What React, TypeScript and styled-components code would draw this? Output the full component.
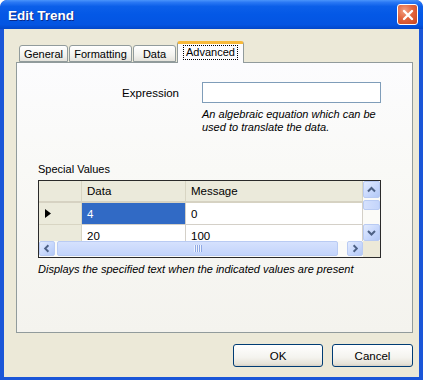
import React from "react";
import styled, { createGlobalStyle } from "styled-components";

const GlobalStyle = createGlobalStyle`
	html, body {
		margin: 0;
		padding: 0;
		background: #ffffff;
	}
	body {
		font-family: "Liberation Sans", Arial, sans-serif;
		font-size: 11px;
		color: #000;
	}
`;

type TabInfo = { label: string; width: number; active?: boolean };

const TABS: Array<TabInfo> = [
	{ label: "General", width: 49 },
	{ label: "Formatting", width: 63 },
	{ label: "Data", width: 43 },
	{ label: "Advanced", width: 67, active: true },
];

const ROWS = [
	{ data: "4", message: "0", current: true },
	{ data: "20", message: "100", current: false },
];

const Chevron: React.FC<{ dir: "up" | "down" | "left" | "right" }> = ({ dir }) => {
	const d = {
		up: "M4 9.5 L7.5 6 L11 9.5",
		down: "M4 6 L7.5 9.5 L11 6",
		left: "M9 4 L5.5 7.5 L9 11",
		right: "M6 4 L9.5 7.5 L6 11",
	}[dir];
	return (
		<svg width="15" height="15" viewBox="0 0 15 15">
			<path d={d} fill="none" stroke="#4d6185" strokeWidth="2" />
		</svg>
	);
};

const App: React.FC = () => {
	return (
		<>
			<GlobalStyle />
			<Window>
				{/* title bar */}
				<TitleBar>
					<Title>Edit Trend</Title>
					<CloseButton>
						<svg width="12" height="12" viewBox="0 0 12 12">
							<path d="M2 2 L10 10 M10 2 L2 10" stroke="#fff" strokeWidth="2.4" strokeLinecap="round" />
						</svg>
					</CloseButton>
				</TitleBar>

				<Body>
					{/* tabs */}
					<TabStrip>
						{TABS.map((tab) => (
							<Tab key={tab.label} $width={tab.width} $active={!!tab.active}>
								{tab.active ? <FocusLabel>{tab.label}</FocusLabel> : tab.label}
							</Tab>
						))}
					</TabStrip>

					<TabPanel>
						{/* expression */}
						<ExprGrid>
							<FieldLabel>Expression</FieldLabel>
							<TextBox />
							<HelpText>
								An algebraic equation which can be
								<br />
								used to translate the data.
							</HelpText>
						</ExprGrid>

						{/* special values */}
						<SectionLabel>Special Values</SectionLabel>
						<GridFrame>
							<GridTable>
								<HeaderCorner />
								<HeaderCell>Data</HeaderCell>
								<HeaderCell>Message</HeaderCell>
								{ROWS.map((row) => (
									<React.Fragment key={row.data}>
										<RowHeader>
											{row.current && (
												<svg width="6" height="9" viewBox="0 0 6 9">
													<path d="M0 0 L6 4.5 L0 9 Z" fill="#000" />
												</svg>
											)}
										</RowHeader>
										<Cell $selected={row.current}>{row.data}</Cell>
										<Cell>{row.message}</Cell>
									</React.Fragment>
								))}
							</GridTable>
							<VScroll>
								<ScrollArrow $h={17}>
									<Chevron dir="up" />
								</ScrollArrow>
								<VThumb />
								<Spacer />
								<ScrollArrow $h={17}>
									<Chevron dir="down" />
								</ScrollArrow>
							</VScroll>
							<HScroll>
								<ScrollArrow $w={16}>
									<Chevron dir="left" />
								</ScrollArrow>
								<HThumb>
									<Grip />
								</HThumb>
								<ScrollArrow $w={16}>
									<Chevron dir="right" />
								</ScrollArrow>
							</HScroll>
							<Corner />
						</GridFrame>
						<HelpText>Displays the specified text when the indicated values are present</HelpText>
					</TabPanel>

					{/* dialog buttons */}
					<ButtonRow>
						<DialogButton $width={90}>OK</DialogButton>
						<DialogButton $width={81}>Cancel</DialogButton>
					</ButtonRow>
				</Body>
			</Window>
		</>
	);
};

const Window = styled.div`
	width: 423px;
	height: 380px;
	box-sizing: border-box;
	display: flex;
	flex-direction: column;
	background: #1a56d8;
	border-radius: 7px 7px 0 0;
	padding: 0 4px 3px 4px;
	overflow: hidden;
`;

const TitleBar = styled.div`
	height: 30px;
	margin: 0 -4px;
	padding: 0 5px 0 8px;
	display: flex;
	align-items: center;
	justify-content: space-between;
	border-radius: 7px 7px 0 0;
	background: linear-gradient(
		180deg,
		#4a95fb 0%,
		#2a78f4 8%,
		#0b5fe9 22%,
		#0458e6 50%,
		#0455e2 85%,
		#0347c9 100%
	);
`;

const Title = styled.div`
	font-family: "Liberation Sans", Arial, sans-serif;
	font-weight: bold;
	font-size: 13.5px;
	color: #fff;
	text-shadow: 1px 1px 0 #0a2a8a;
	padding-top: 1px;
`;

const CloseButton = styled.div`
	width: 21px;
	height: 21px;
	box-sizing: border-box;
	border: 1px solid #fff;
	border-radius: 3px;
	display: flex;
	align-items: center;
	justify-content: center;
	background: radial-gradient(circle at 35% 30%, #f2a184 0%, #e2653e 45%, #c8441e 100%);
`;

const Body = styled.div`
	flex: 1;
	background: #ece9d8;
	display: flex;
	flex-direction: column;
	padding: 12px 6px 10px 12px;
`;

const TabStrip = styled.div`
	height: 21px;
	display: flex;
	align-items: flex-end;
	gap: 1px;
	padding-left: 3px;
	position: relative;
	z-index: 1;
`;

const Tab = styled.div<{ $width: number; $active: boolean }>`
	width: ${(p) => p.$width}px;
	box-sizing: border-box;
	height: ${(p) => (p.$active ? 22 : 17)}px;
	margin-bottom: ${(p) => (p.$active ? -1 : 0)}px;
	border: 1px solid #919b9c;
	border-bottom: ${(p) => (p.$active ? "none" : "1px solid #919b9c")};
	border-top: ${(p) => (p.$active ? "3px solid #f7b93a" : "1px solid #919b9c")};
	border-radius: 3px 3px 0 0;
	background: ${(p) => (p.$active ? "#fcfcfe" : "linear-gradient(180deg, #ffffff 0%, #f3f3ef 60%, #e4e3dc 100%)")};
	display: flex;
	align-items: ${(p) => (p.$active ? "flex-start" : "center")};
	justify-content: center;
	font-size: 11px;
	padding-top: ${(p) => (p.$active ? 1 : 0)}px;
`;

const FocusLabel = styled.span`
	border: 1px dotted #000;
	padding: 0 2px;
	line-height: 13px;
`;

const TabPanel = styled.div`
	height: 271px;
	box-sizing: border-box;
	border: 1px solid #919b9c;
	background: linear-gradient(180deg, #fcfcfe 0%, #f9f9f6 40%, #f4f3ee 100%);
	display: flex;
	flex-direction: column;
	padding: 19px 31px 0 21px;
`;

const ExprGrid = styled.div`
	display: grid;
	grid-template-columns: 1fr 179px;
	column-gap: 23px;
	row-gap: 5px;
`;

const FieldLabel = styled.div`
	justify-self: end;
	align-self: center;
	font-size: 11.5px;
	padding-top: 1px;
`;

const TextBox = styled.div`
	height: 21px;
	box-sizing: border-box;
	border: 1px solid #7f9db9;
	background: #fff;
`;

const HelpText = styled.div`
	grid-column: 2;
	font-style: italic;
	font-size: 11px;
	line-height: 13px;
	margin-top: 0;
	& + & {
		margin-top: 0;
	}
`;

const SectionLabel = styled.div`
	margin-top: 29px;
	line-height: 13px;
	font-size: 11px;
`;

const GridFrame = styled.div`
	margin-top: 4px;
	margin-bottom: 5px;
	height: 78px;
	box-sizing: border-box;
	border: 1px solid #2a2a2a;
	display: grid;
	grid-template-columns: 1fr 17px;
	grid-template-rows: 60px 16px;
	background: #ece9d8;
`;

const GridTable = styled.div`
	display: grid;
	grid-template-columns: 43px 104px 1fr;
	grid-auto-rows: 22px;
	overflow: hidden;
	background: #fff;
`;

const HeaderCorner = styled.div`
	background: #ebeadb;
	border-right: 1px solid #d8d5c3;
	border-bottom: 2px solid #d6d2c2;
`;

const HeaderCell = styled.div`
	background: #ebeadb;
	border-right: 1px solid #d8d5c3;
	border-bottom: 2px solid #d6d2c2;
	display: flex;
	align-items: center;
	padding-left: 5px;
	font-size: 11.5px;
`;

const RowHeader = styled.div`
	background: #ebeadb;
	border-right: 1px solid #d8d5c3;
	border-bottom: 1px solid #d8d5c3;
	display: flex;
	align-items: center;
	padding-left: 6px;
`;

const Cell = styled.div<{ $selected?: boolean }>`
	background: ${(p) => (p.$selected ? "#316ac5" : "#fff")};
	color: ${(p) => (p.$selected ? "#fff" : "#000")};
	border-right: 1px solid #d4d0c8;
	border-bottom: 1px solid #d4d0c8;
	display: flex;
	align-items: center;
	padding-left: 5px;
	font-size: 11.5px;
`;

const VScroll = styled.div`
	display: flex;
	flex-direction: column;
	background: #fbfbf8;
`;

const HScroll = styled.div`
	display: flex;
	background: #fbfbf8;
	padding-bottom: 1px;
`;

const ScrollArrow = styled.div<{ $w?: number; $h?: number }>`
	${(p) => (p.$w ? `width: ${p.$w}px;` : "")}
	${(p) => (p.$h ? `height: ${p.$h}px;` : "")}
	flex-shrink: 0;
	box-sizing: border-box;
	border: 1px solid #b9cbf3;
	border-radius: 2px;
	background: linear-gradient(135deg, #e2ebfe 0%, #c5d6fc 60%, #b3c8f5 100%);
	display: flex;
	align-items: center;
	justify-content: center;
`;

const VThumb = styled.div`
	height: 10px;
	margin-top: 2px;
	box-sizing: border-box;
	border: 1px solid #b9cbf3;
	border-radius: 2px;
	background: linear-gradient(90deg, #d5e1fd 0%, #c3d4fb 100%);
`;

const HThumb = styled.div`
	flex: 1;
	margin: 0 9px 0 2px;
	box-sizing: border-box;
	border: 1px solid #b9cbf3;
	border-radius: 2px;
	background: linear-gradient(180deg, #d5e1fd 0%, #c3d4fb 100%);
	display: flex;
	align-items: center;
	justify-content: center;
`;

const Grip = styled.div`
	width: 8px;
	height: 7px;
	background: repeating-linear-gradient(90deg, #eef3fe 0 1px, #8fa9e4 1px 2px);
`;

const Spacer = styled.div`
	flex: 1;
`;

const Corner = styled.div`
	background: #ece9d8;
`;

const ButtonRow = styled.div`
	display: flex;
	justify-content: flex-end;
	gap: 9px;
	margin-top: 11px;
`;

const DialogButton = styled.div<{ $width: number }>`
	width: ${(p) => p.$width}px;
	height: 23px;
	box-sizing: border-box;
	border: 1px solid #003c74;
	border-radius: 3px;
	background: linear-gradient(180deg, #ffffff 0%, #f4f3ee 60%, #e6e3d8 90%, #d6d0c5 100%);
	display: flex;
	align-items: center;
	justify-content: center;
	font-size: 11.5px;
`;

export default App;
